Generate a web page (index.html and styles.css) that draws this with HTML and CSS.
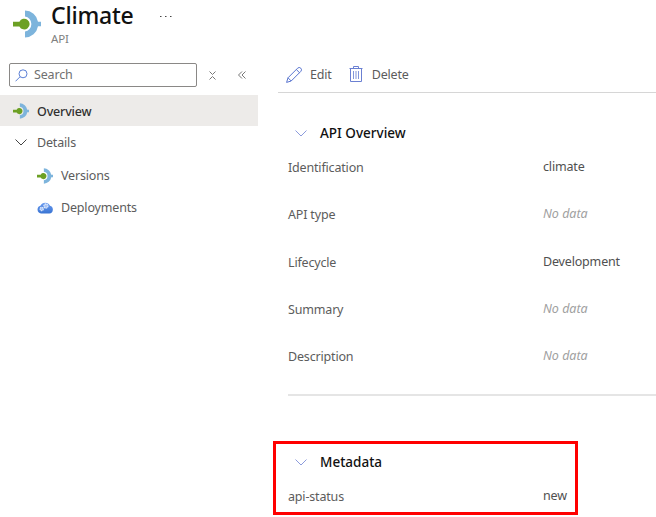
FILE: index.html
```html
<!DOCTYPE html>
<html lang="en">
<head>
<meta charset="utf-8">
<title>Climate - API</title>
<link rel="stylesheet" href="styles.css">
</head>
<body>
<svg width="0" height="0" class="defs" aria-hidden="true">
  <symbol id="api" viewBox="0 0 28 28">
    <path d="M12 .5a13.400 13.400 0 0 1 13 11.200H28v4.600h-3A13.400 13.400 0 0 1 12 27.500v-6a7.600 7.600 0 0 0 0-15z" fill="#7db4dc"/>
    <path d="M0 11.700h6.400a5.400 5.400 0 1 1 0 4.800H0z" fill="#6ca024"/>
  </symbol>
  <symbol id="chevron" viewBox="0 0 12 7">
    <path d="M.5.500 6 6 11.500.500" fill="none" stroke="currentColor"/>
  </symbol>
</svg>
<header class="header">
  <svg class="header-icon"><use href="#api"/></svg>
  <div class="heading">
    <h1 class="title">Climate</h1>
    <div class="subtitle">API</div>
  </div>
  <svg class="more" viewBox="0 0 12 2"><path d="M0 .500h1.500M5 .500h1.500M10 .500h1.500" stroke="#444"/></svg>
</header>
<div class="layout">
  <nav class="sidebar">
    <div class="tools">
      <div class="search">
        <svg class="search-icon" viewBox="0 0 13 13"><circle cx="8" cy="4.800" r="4" /><path d="M5.100 7.700.500 12.300"/></svg>
        <span>Search</span>
      </div>
      <svg class="collapse" viewBox="0 0 7 9"><path d="M.5.500 3.500 3.500 6.500.500M.5 8.500 3.500 5.500 6.500 8.500"/></svg>
      <svg class="hide" viewBox="0 0 8 8"><path d="M4 .500.500 4 4 7.500M7.500.500 4 4 7.500 7.500"/></svg>
    </div>
    <div class="item selected"><svg class="small-icon"><use href="#api"/></svg><span>Overview</span></div>
    <div class="item group"><svg class="chevron dark"><use href="#chevron"/></svg><span>Details</span></div>
    <div class="item child"><svg class="small-icon"><use href="#api"/></svg><span>Versions</span></div>
    <div class="item child">
      <svg class="small-icon" viewBox="0 0 16 16">
        <defs><linearGradient id="cloud" x2="0" y2="1"><stop stop-color="#6c9cf0"/><stop offset="1" stop-color="#3974d3"/></linearGradient></defs>
        <path d="M4 13.500a4 4 0 0 1-.6-7.800A5.300 5.300 0 0 1 13 5.700 4 4 0 0 1 12.300 13.500z" fill="url(#cloud)"/>
        <circle cx="8.900" cy="6" r="2" fill="#a9c4f4" stroke="#dce8fc" stroke-width="1.300" stroke-dasharray="1.400 .400"/>
        <circle cx="4.700" cy="9" r="1.600" fill="#a9c4f4" stroke="#dce8fc" stroke-width="1.200" stroke-dasharray="1.300 .400"/>
      </svg>
      <span>Deployments</span>
    </div>
  </nav>
  <main class="main">
    <div class="commands">
      <svg class="pencil" viewBox="0 0 16 16"><path d="M.6 15.400 2 10.800 11.600 1.200a2 2 0 0 1 3.200 3.200L5.200 14zM2 10.800l3.200 3.200M10.300 2.500l3.200 3.200"/></svg>
      <span>Edit</span>
      <svg class="trash" viewBox="0 0 14 17"><path d="M.5 2.500h13M4.500 2.500v-2h5v2M1.500 2.500v13h11v-13"/><path class="slats" d="M4.500 5v8M7 5v8M9.500 5v8"/></svg>
      <span>Delete</span>
    </div>
    <section class="overview">
      <h2 class="section-title"><svg class="chevron"><use href="#chevron"/></svg><span>API Overview</span></h2>
      <dl class="fields">
        <dt>Identification</dt><dd>climate</dd>
        <dt>API type</dt><dd class="empty">No data</dd>
        <dt>Lifecycle</dt><dd>Development</dd>
        <dt>Summary</dt><dd class="empty">No data</dd>
        <dt>Description</dt><dd class="empty">No data</dd>
      </dl>
    </section>
    <section class="metadata">
      <h2 class="section-title"><svg class="chevron"><use href="#chevron"/></svg><span>Metadata</span></h2>
      <dl class="fields"><dt>api-status</dt><dd>new</dd></dl>
    </section>
  </main>
</div>
</body>
</html>
```
FILE: styles.css
```css
* { box-sizing: border-box; }
body {
  margin: 0;
  height: 517px;
  overflow: hidden;
  background: #fff;
  color: #5c5c5c;
  font: 12.5px/18px "Noto Sans", "Open Sans", sans-serif;
  letter-spacing: -0.17px;
}
svg { flex: none; display: block; }
.defs { position: absolute; }
h1, h2, dl, dd { margin: 0; font-weight: 400; }

.header { display: flex; height: 60px; padding-left: 13px; }
.header-icon { width: 28px; height: 28px; margin-top: 10px; }
.heading { width: 119px; padding: 1px 0 0 10px; }
.title { font-size: 23px; line-height: 28px; color: #111; font-weight: 500; letter-spacing: -0.2px; }
.subtitle { font-size: 11.5px; line-height: 16px; margin-top: 2px; color: #808080; letter-spacing: -0.2px; }
.more { width: 12px; height: 2px; margin-top: 16px; }

.layout { display: flex; height: 457px; }
.sidebar { width: 258px; margin-right: 20px; }
.tools { display: flex; align-items: center; height: 35px; padding: 0 0 5px 9px; }
.search {
  display: flex;
  align-items: center;
  gap: 6px;
  width: 188px;
  height: 24px;
  padding-left: 5px;
  border: 1px solid #8a8886;
  border-radius: 2px;
  color: #707070;
}
.search-icon { width: 13px; height: 13px; fill: none; stroke: #5c80d6; }
.collapse { width: 7px; height: 9px; margin-left: 12px; fill: none; stroke: #777; }
.hide { width: 8px; height: 8px; margin-left: 22px; fill: none; stroke: #777; }
.item { display: flex; align-items: center; height: 32px; }
.selected { height: 31px; padding-left: 13px; gap: 8px; background: #edebe9; color: #303030; font-weight: 500; }
.selected span { padding-top: 2px; }
.group { height: 33px; padding-left: 15px; gap: 10px; }
.child { padding: 2px 0 0 37px; gap: 8px; }
.small-icon { width: 16px; height: 16px; }
.chevron { width: 12px; height: 7px; color: #8c9bdc; }
.dark { color: #444; }

.main { flex: 1; }
.commands { display: flex; align-items: center; height: 33px; padding: 0 0 3px 8px; border-bottom: 1px solid #d6d6d6; }
.commands span { padding-top: 1px; }
.pencil { width: 16px; height: 16px; margin-right: 8px; fill: none; stroke: #5874cf; }
.trash { width: 14px; height: 17px; margin: 0 9px 0 17px; fill: none; stroke: #6b80d2; }
.slats { stroke: #8296da; }
.overview { height: 303px; margin-left: 10px; padding-top: 31px; border-bottom: 2px solid #e5e5e5; }
.section-title { display: flex; align-items: center; gap: 13px; height: 18px; padding-left: 7px; font-size: 13.5px; font-weight: 500; letter-spacing: 0; color: #111; }
.fields { display: grid; grid-template-columns: 255px 1fr; grid-auto-rows: 47.300px; margin-top: 16px; }
.fields dt { padding-top: 1px; }
.fields dd { color: #505050; }
.fields .empty { color: #a0a0a0; font-style: italic; letter-spacing: 0; }
.metadata { width: 305px; height: 74px; margin: 45px 0 0 -5px; padding: 9px 0 0 12px; border: 3px solid #f00; }
```
